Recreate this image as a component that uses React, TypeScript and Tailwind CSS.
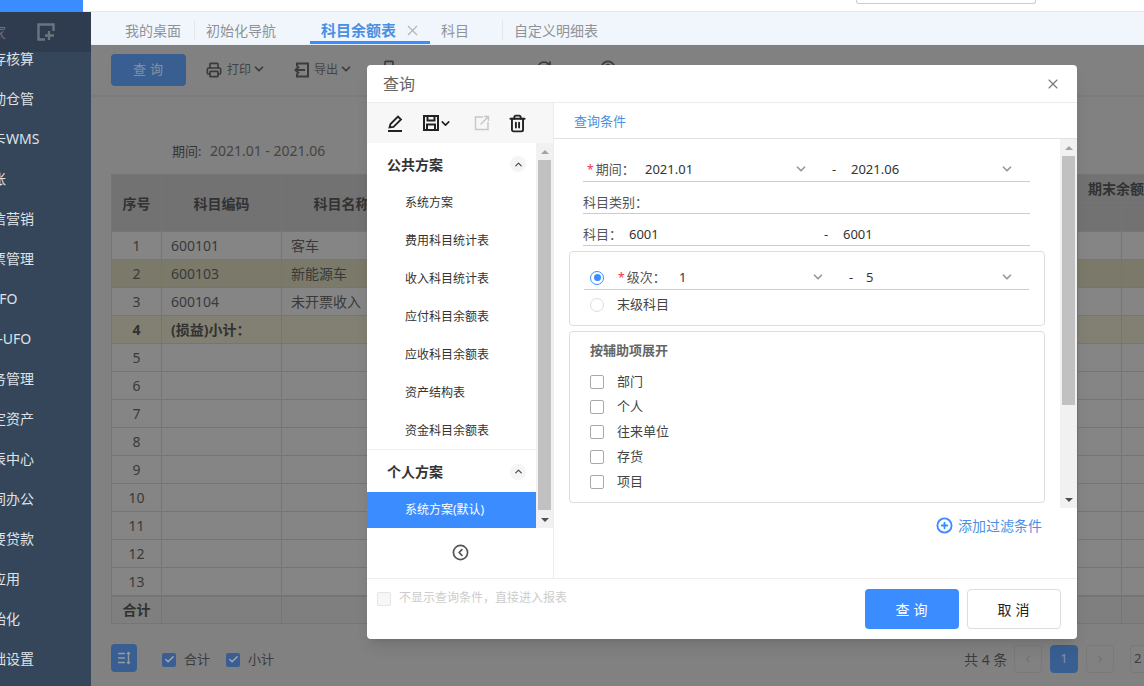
import * as React from "react";
import { Check, ChevronDown, ChevronLeft, ChevronRight, ChevronUp, CircleChevronLeft, CircleHelp, CirclePlus, Printer, RefreshCw, Trash2, X } from "lucide-react";

const navItems = [
  { label: "库存核算", cls: "ml-[-22px]" },
  { label: "移动仓管", cls: "ml-[-22px]" },
  { label: "云卡WMS", cls: "ml-[-22px]" },
  { label: "总账", cls: "ml-[-22px]" },
  { label: "微信营销", cls: "ml-[-22px]" },
  { label: "发票管理", cls: "ml-[-22px]" },
  { label: "UFO", cls: "ml-[-11px]" },
  { label: "T-UFO", cls: "ml-[-9px]" },
  { label: "业务管理", cls: "ml-[-22px]" },
  { label: "固定资产", cls: "ml-[-22px]" },
  { label: "报表中心", cls: "ml-[-22px]" },
  { label: "协同办公", cls: "ml-[-22px]" },
  { label: "需要贷款", cls: "ml-[-22px]" },
  { label: "云应用", cls: "ml-[-22px]" },
  { label: "初始化", cls: "ml-[-22px]" },
  { label: "基础设置", cls: "ml-[-22px]" },
];

const rows: { no: string; code?: string; name?: string; tone?: string; bold?: boolean }[] = [
  { no: "1", code: "600101", name: "客车" },
  { no: "2", code: "600103", name: "新能源车", tone: "bg-[#aca88a]" },
  { no: "3", code: "600104", name: "未开票收入" },
  { no: "4", code: "(损益)小计：", tone: "bg-[#b8b59b]", bold: true },
  ...["5", "6", "7", "8", "9", "10", "11", "12", "13"].map((no) => ({ no })),
];

const publicPlans = ["系统方案", "费用科目统计表", "收入科目统计表", "应付科目余额表", "应收科目余额表", "资产结构表", "资金科目余额表"];
const auxItems = ["部门", "个人", "往来单位", "存货", "项目"];

function Sidebar() {
  return (
    <aside className="w-[91px] shrink-0 overflow-hidden bg-[#36465a] text-[14px] text-[#dde2e8]">
      <div className="relative z-10 flex h-[40px] items-center overflow-hidden bg-[#2f3b4e]">
        <span className="ml-[-9px] text-[15px] text-[#6c7480]">家</span>
        <svg viewBox="0 0 18 18" className="ml-[31px] size-[18px] text-[#6c7480]" fill="none" stroke="currentColor" strokeWidth="2.4">
          <path d="M8 16.5H1.5V1.5h15V8" />
          <path d="M12 8v9M8 12.5h9" />
        </svg>
      </div>
      <ul className="mt-[-14px]">
        {navItems.map((item) => (
          <li key={item.label} className="flex h-[40px] items-center whitespace-nowrap">
            <span className={item.cls}>{item.label}</span>
          </li>
        ))}
      </ul>
    </aside>
  );
}

function TabBar() {
  return (
    <div className="flex h-[33px] shrink-0 items-center border-b border-[#e9eef5] bg-[#f1f6fd] pt-[3px] text-[14px] text-[#8f9398]">
      <div className="flex h-[20px] w-[104px] items-center border-r border-[#e3e7ec] pl-[34px] pt-[2px]">我的桌面</div>
      <div className="flex h-[20px] w-[115px] items-center pl-[11px] pt-[2px]">初始化导航</div>
      <div className="flex h-[29px] w-[120px] items-center justify-between border-b-[3px] border-[#3a8cff] pl-[11px] pr-[9px] pt-[5px] text-[15px] font-bold text-[#4a90e2]">
        科目余额表
        <X className="size-[17px] text-[#b0b4b9]" strokeWidth={1.5} />
      </div>
      <div className="flex h-[20px] w-[73px] items-center border-r border-[#e3e7ec] pl-[11px] pt-[2px]">科目</div>
      <div className="flex h-[20px] items-center pl-[11px] pt-[2px]">自定义明细表</div>
    </div>
  );
}

function ReportTable() {
  const cell = "border border-[#a0a0a0]";
  return (
    <table className="w-[1090px] shrink-0 table-fixed border-collapse text-[14px] text-[#303030]">
      <colgroup>
        <col className="w-[50px]" />
        <col className="w-[120px]" />
        <col className="w-[120px]" />
        <col className="w-[676px]" />
        <col className="w-[44px]" />
        <col className="w-[80px]" />
      </colgroup>
      <thead className="bg-[#9c9c9c] font-bold text-[#222]">
        <tr className="h-[28px]">
          <th rowSpan={2} className={cell}>序号</th>
          <th rowSpan={2} className={cell}>科目编码</th>
          <th rowSpan={2} className={cell}>科目名称</th>
          <th rowSpan={2} className={cell} />
          <th colSpan={2} className={`${cell} whitespace-nowrap pl-[10px] text-left`}>期末余额</th>
        </tr>
        <tr className="h-[29px]">
          <th className={cell} />
          <th className={cell} />
        </tr>
      </thead>
      <tbody className="bg-[#bfbfbf]">
        {rows.map((r) => (
          <tr key={r.no} className={`h-[28px] ${r.tone ?? ""} ${r.bold ? "font-bold text-[#222]" : ""}`}>
            <td className={`${cell} text-center`}>{r.no}</td>
            <td className={`${cell} pl-[9px]`}>{r.code}</td>
            <td className={`${cell} pl-[9px]`}>{r.name}</td>
            <td className={cell} />
            <td className={cell} />
            <td className={cell} />
          </tr>
        ))}
        <tr className="h-[28px] bg-[#b4b4b4] font-bold text-[#222]">
          <td className={`${cell} border-t-2 text-center`}>合计</td>
          <td className={`${cell} border-t-2`} />
          <td className={`${cell} border-t-2`} />
          <td className={`${cell} border-t-2`} />
          <td className={`${cell} border-t-2`} />
          <td className={`${cell} border-t-2`} />
        </tr>
      </tbody>
    </table>
  );
}

function BlueCheck({ label }: { label: string }) {
  return (
    <label className="flex shrink-0 items-center gap-[8px] whitespace-nowrap">
      <span className="flex size-[14px] shrink-0 items-center justify-center rounded-[2px] bg-[#2f76d8] text-white">
        <Check className="size-[11px]" strokeWidth={3} />
      </span>
      {label}
    </label>
  );
}

function PageBox({ children, active }: { children: React.ReactNode; active?: boolean }) {
  return (
    <span className={`flex h-[28px] w-[28px] shrink-0 items-center justify-center rounded-[4px] border ${active ? "border-[#2f76d8] bg-[#2f76d8] text-white/70" : "border-[#a8a8a8] text-[#888]"}`}>
      {children}
    </span>
  );
}

function ReportPage() {
  return (
    <div className="relative min-h-0 flex-1 overflow-hidden bg-[#b8b8b8]">
      <div className="flex h-full flex-col px-[20px]">
        <div className="flex h-[50px] shrink-0 items-start pt-[9px] text-[12px] text-[#333]">
          <button type="button" className="h-[32px] w-[75px] shrink-0 rounded-[4px] bg-[#2f76d8] pl-[3px] text-[13px] tracking-[4px] text-white/70">查询</button>
          <Printer className="ml-[20px] mt-[8px] size-[16px] shrink-0" strokeWidth={2.5} />
          <span className="ml-[5px] mt-[7px] shrink-0 text-[#444]">打印</span>
          <ChevronDown className="ml-[1px] mt-[8px] size-[14px] shrink-0" strokeWidth={3} />
          <svg viewBox="0 0 16 16" className="ml-[28px] mt-[8px] size-[16px] shrink-0" fill="none" stroke="currentColor" strokeWidth="2">
            <path d="M3 4.5V1.5h11v13H3v-3" />
            <path d="M11 8H1.5M5 4.5 1.5 8 5 11.5" />
          </svg>
          <span className="ml-[4px] mt-[7px] shrink-0 text-[#444]">导出</span>
          <ChevronDown className="ml-[1px] mt-[8px] size-[14px] shrink-0" strokeWidth={3} />
          <Printer className="ml-[28px] mt-[6px] size-[16px] shrink-0" strokeWidth={2.5} />
          <RefreshCw className="ml-[139px] mt-[6px] size-[16px] shrink-0" strokeWidth={2.5} />
          <CircleHelp className="ml-[48px] mt-[6px] size-[16px] shrink-0" strokeWidth={2.5} />
        </div>
        <div className="mx-[-20px] h-[2px] shrink-0 bg-[#adadad]" />
        <p className="mt-[43px] h-[34px] shrink-0 pl-[61px] text-[13px] leading-[22px] text-[#2a2a2a]">
          期间: <span className="ml-[5px] text-[14px] text-[#444]">2021.01 - 2021.06</span>
        </p>
        <ReportTable />
        <div className="mt-[20px] flex w-[1100px] shrink-0 items-start text-[13px] text-[#333]">
          <span className="flex h-[28px] w-[26px] shrink-0 items-center justify-center rounded-[4px] bg-[#2f76d8] text-white/80">
            <svg viewBox="0 0 14 14" className="size-[14px]" fill="none" stroke="currentColor" strokeWidth="1.4">
              <path d="M1 2.5h7M1 7h7M1 11.5h7M11.5 1.5v11M10 3l1.5-1.5L13 3M10 11l1.5 1.5L13 11" />
            </svg>
          </span>
          <div className="ml-[25px] mt-[6px] flex w-[112px] shrink-0 gap-[16px]">
            <BlueCheck label="合计" />
            <BlueCheck label="小计" />
          </div>
          <div className="ml-[690px] mt-[1px] flex shrink-0 items-center gap-[8px] whitespace-nowrap">
            <span className="w-[42px] shrink-0 text-[14px]">共 4 条</span>
            <PageBox><ChevronLeft className="size-[12px]" /></PageBox>
            <PageBox active>1</PageBox>
            <PageBox><ChevronRight className="size-[12px]" /></PageBox>
            <span className="ml-[8px] flex h-[28px] w-[40px] shrink-0 items-center rounded-[4px] border border-[#a8a8a8] pl-[3px]">2</span>
          </div>
        </div>
      </div>
      <div className="absolute inset-0 bg-[#44444478]" />
    </div>
  );
}

function ScrollBar({ thumb }: { thumb: string }) {
  return (
    <div className="flex w-[17px] shrink-0 flex-col items-center bg-[#f1f1f1]">
      <div className="flex h-[17px] shrink-0 items-center justify-center">
        <span className="size-0 border-x-[4px] border-b-[4px] border-x-transparent border-b-[#a3a3a3]" />
      </div>
      <div className={`w-[13px] shrink-0 bg-[#c1c1c1] ${thumb}`} />
      <div className="flex-1" />
      <div className="flex h-[17px] shrink-0 items-center justify-center">
        <span className="size-0 border-x-[4px] border-t-[4px] border-x-transparent border-t-[#505050]" />
      </div>
    </div>
  );
}

function GroupToggle() {
  return (
    <span className="flex size-[16px] items-center justify-center rounded-full bg-[#f5f5f5] text-[#444]">
      <ChevronUp className="size-[11px]" strokeWidth={2.5} />
    </span>
  );
}

function PlanPanel() {
  return (
    <div className="flex w-[187px] shrink-0 flex-col border-r border-[#ececec]">
      <div className="flex h-[40px] shrink-0 items-center bg-[#f7f7f7] text-[#222]">
        <svg viewBox="0 0 18 18" className="ml-[19px] size-[18px]" fill="none" stroke="currentColor" strokeWidth="1.8">
          <path d="M2 17h14M3.5 13.5 4.5 10 12 2.5l3 3L7.5 13z" />
        </svg>
        <svg viewBox="0 0 16 16" className="ml-[19px] size-[16px]" fill="none" stroke="currentColor" strokeWidth="2">
          <path d="M1 1h14v14H1zM4.5 1v4.5h7V1M4 15V9.5h8V15" />
        </svg>
        <ChevronDown className="size-[13px]" strokeWidth={3} />
        <svg viewBox="0 0 16 16" className="ml-[22px] size-[16px] text-[#c8c8c8]" fill="none" stroke="currentColor" strokeWidth="1.5">
          <path d="M9 2H1.5v12.5H14V7M6.5 9.5 14.5 1.5M10 1.5h4.5V6" />
        </svg>
        <Trash2 className="ml-[18px] size-[19px]" strokeWidth={2.4} />
      </div>
      <div className="flex h-[385px] shrink-0">
        <div className="min-w-0 flex-1 text-[#333]">
          <div className="flex h-[40px] items-center justify-between pl-[20px] pr-[10px] pt-[2px] text-[14px] font-bold">
            公共方案
            <GroupToggle />
          </div>
          <ul className="border-b border-[#f2f2f2] text-[12px]">
            {publicPlans.map((p) => (
              <li key={p} className="flex h-[38px] items-center pl-[38px] pt-[2px]">{p}</li>
            ))}
          </ul>
          <div className="flex h-[42px] items-center justify-between pl-[20px] pr-[10px] pt-[1px] text-[14px] font-bold">
            个人方案
            <GroupToggle />
          </div>
          <div className="flex h-[36px] items-center bg-[#3a8cff] pl-[38px] text-[12px] text-white">系统方案(默认)</div>
        </div>
        <ScrollBar thumb="h-[350px]" />
      </div>
      <div className="flex flex-1 justify-center pt-[16px] text-[#555]">
        <CircleChevronLeft className="size-[17px]" strokeWidth={2.4} />
      </div>
    </div>
  );
}

function Arrow() {
  return <ChevronDown className="mt-[-2px] size-[14px] shrink-0 text-[#999]" strokeWidth={3} />;
}

function Star() {
  return <span className="text-[12px] text-[#e8364f]">*</span>;
}

function Radio({ on }: { on?: boolean }) {
  return (
    <span className={`flex size-[14px] shrink-0 items-center justify-center rounded-full border ${on ? "border-[#3a8cff]" : "border-[#dddddd]"}`}>
      {on && <span className="size-[7px] rounded-full bg-[#3a8cff]" />}
    </span>
  );
}

function QueryForm() {
  return (
    <div className="min-w-0 flex-1 overflow-hidden pl-[15px] pt-[18px] text-[13px] text-[#555]">
      <div className="ml-[14px] flex h-[25px] w-[447px] items-center border-b border-[#cccccc] pt-[2px]">
        <span className="flex w-[62px] shrink-0 items-center gap-[2px] whitespace-nowrap pl-[4px]"><Star />期间：</span>
        <span className="w-[149px] shrink-0 text-[#333]">2021.01</span>
        <Arrow />
        <span className="w-[24px] shrink-0" />
        <span className="w-[19px] shrink-0 text-[#333]">-</span>
        <span className="w-[149px] shrink-0 text-[#333]">2021.06</span>
        <Arrow />
      </div>
      <div className="ml-[14px] flex h-[32px] w-[447px] items-center border-b border-[#cccccc] pt-[10px]">科目类别：</div>
      <div className="ml-[14px] flex h-[32px] w-[447px] items-center border-b border-[#cccccc] pt-[10px]">
        <span className="w-[46px] shrink-0">科目：</span>
        <span className="w-[195px] shrink-0 text-[#333]">6001</span>
        <span className="w-[19px] shrink-0 text-[#333]">-</span>
        <span className="text-[#333]">6001</span>
      </div>
      <div className="mt-[5px] h-[75px] w-[476px] rounded-[4px] border border-[#dddddd] pl-[14px] pt-[12px]">
        <div className="flex h-[26px] w-[445px] items-center border-b border-[#cccccc] pl-[6px] pt-[2px]">
          <Radio on />
          <span className="ml-[14px] flex w-[61px] shrink-0 items-center gap-[2px] whitespace-nowrap"><Star />级次：</span>
          <span className="w-[132px] shrink-0 text-[#333]">1</span>
          <Arrow />
          <span className="w-[24px] shrink-0" />
          <span className="w-[17px] shrink-0 text-[#333]">-</span>
          <span className="w-[134px] shrink-0 text-[#333]">5</span>
          <Arrow />
        </div>
        <div className="flex h-[30px] items-center pl-[6px]">
          <Radio />
          <span className="ml-[13px] text-[#444]">末级科目</span>
        </div>
      </div>
      <div className="mt-[5px] h-[172px] w-[476px] rounded-[4px] border border-[#dddddd] pl-[20px] pt-[8px]">
        <h3 className="h-[20px] font-bold leading-[20px] text-[#666]">按辅助项展开</h3>
        <ul className="mt-[9px]">
          {auxItems.map((a) => (
            <li key={a} className="flex h-[25px] items-center gap-[13px] text-[#444]">
              <span className="size-[14px] rounded-[2px] border border-[#aaaaaa]" />
              {a}
            </li>
          ))}
        </ul>
      </div>
    </div>
  );
}

function QueryDialog() {
  return (
    <div className="absolute left-[367px] top-[65px] flex h-[574px] w-[710px] flex-col overflow-hidden rounded-[4px] bg-white shadow-lg">
      <div className="flex h-[38px] shrink-0 items-center justify-between border-b border-[#ececec] px-[16px]">
        <h2 className="text-[16px] text-[#666]">查询</h2>
        <X className="size-[16px] text-[#777]" strokeWidth={1.6} />
      </div>
      <div className="flex h-[475px] shrink-0">
        <PlanPanel />
        <div className="flex min-w-0 flex-1 flex-col">
          <div className="flex h-[36px] shrink-0 items-center border-b border-[#e2e2e2] pl-[20px] pt-[3px] text-[13px] text-[#4a90e2]">查询条件</div>
          <div className="flex h-[369px] shrink-0">
            <QueryForm />
            <ScrollBar thumb="h-[249px]" />
          </div>
          <div className="flex flex-1 items-start justify-end gap-[5px] pr-[35px] pt-[9px] text-[14px] leading-[18px] text-[#4a90e2]">
            <CirclePlus className="size-[17px] text-[#3a8cff]" strokeWidth={2.6} />
            添加过滤条件
          </div>
        </div>
      </div>
      <div className="flex flex-1 items-start border-t border-[#ececec] pl-[10px] pt-[10px]">
        <span className="mt-[3px] size-[14px] shrink-0 rounded-[2px] border border-[#e5e5e5] bg-[#f7f7f7]" />
        <span className="ml-[8px] shrink-0 text-[12px] leading-[18px] text-[#cccccc]">不显示查询条件，直接进入报表</span>
        <button type="button" className="ml-[298px] h-[40px] w-[94px] shrink-0 rounded-[4px] bg-[#3a8cff] pl-[3px] text-[14px] tracking-[4px] text-white">查询</button>
        <button type="button" className="ml-[8px] h-[40px] w-[94px] shrink-0 rounded-[4px] border border-[#dddddd] pl-[3px] text-[14px] tracking-[4px] text-[#222]">取消</button>
      </div>
    </div>
  );
}

export default function App() {
  return (
    <div className="relative flex h-[686px] w-[1144px] flex-col overflow-hidden bg-white font-['Noto_Sans','Noto_Sans_CJK_SC',sans-serif]">
      <header className="flex h-[12px] shrink-0 border-b border-[#e3e6ea] bg-white">
        <div className="h-[12px] w-[83px] bg-[#3a8cff]" />
        <div className="ml-[773px] h-[4px] w-[180px] rounded-b-[3px] border border-t-0 border-[#cccccc]" />
      </header>
      <div className="flex min-h-0 flex-1">
        <Sidebar />
        <main className="flex min-w-0 flex-1 flex-col">
          <TabBar />
          <ReportPage />
        </main>
      </div>
      <QueryDialog />
    </div>
  );
}
